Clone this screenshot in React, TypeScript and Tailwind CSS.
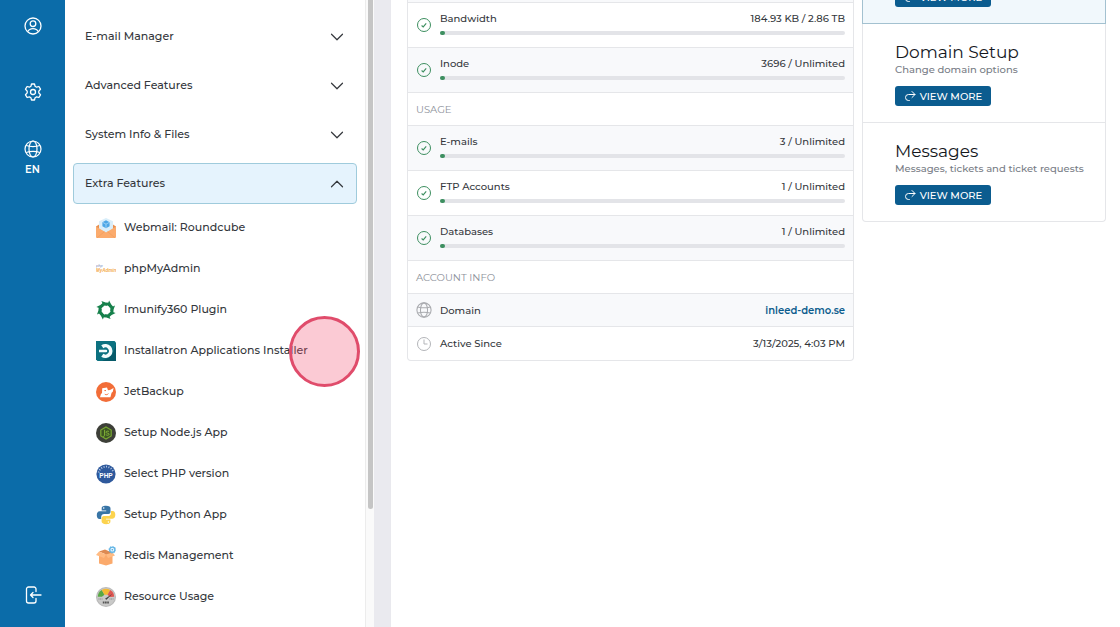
import type { ReactNode } from 'react';
import clsx from 'clsx';
import { ChevronDown, ChevronUp } from 'lucide-react';

interface FeatureLink {
    label: string;
    icon: ReactNode;
    active?: boolean;
}

interface UsageRowProps {
    label: string;
    value: string;
    striped?: boolean;
}

const RoundcubeIcon = () => (
    <svg viewBox="0 0 20 20" className="size-5 shrink-0" aria-hidden="true">
        <path d="M0 8.5 10 2l10 6.5V19H0z" fill="#e8904f" />
        <path d="M3 3.2 10 0l7 3.2v8L10 15l-7-4z" fill="#d9eefa" />
        <path d="m10 2.2 3.6 2v4L10 10.2l-3.6-2v-4z" fill="#4ba6e6" />
        <path d="m10 6.2 3.4-1.9M10 6.2 6.6 4.3M10 6.2v3.9" stroke="#b9e0f8" strokeWidth=".7" />
        <path d="m0 8.5 10 6 10-6V19a1 1 0 0 1-1 1H1a1 1 0 0 1-1-1z" fill="#fbab6d" />
        <path d="m1 19.8 7.5-6.2M19 19.8l-7.5-6.2" stroke="#f09a5b" strokeWidth=".6" />
    </svg>
);

const PhpMyAdminIcon = () => (
    <svg viewBox="0 0 20 20" className="size-5 shrink-0" aria-hidden="true">
        <text x="0" y="8" fontSize="4" fontStyle="italic" fontFamily="Liberation Sans, sans-serif" fill="#7584b5">php</text>
        <text x="0" y="12.500" fontSize="4.500" fontStyle="italic" fontWeight="700" fontFamily="Liberation Sans, sans-serif" fill="#f3aa4c">MyAdmin</text>
    </svg>
);

const ImunifyIcon = () => (
    <svg viewBox="-10 -10 20 20" className="size-5 shrink-0" aria-hidden="true">
        <circle r="5.600" fill="none" stroke="#16804b" strokeWidth="1.600" />
        {[0, 45, 90, 135, 180, 225, 270, 315].map((angle) => (
            <path key={angle} d="M-4.600-9-.4-7.600 3.800-7.200.8-4.200-2.600-4.800z" fill="#16804b" transform={`rotate(${angle})`} />
        ))}
    </svg>
);

const InstallatronIcon = () => (
    <svg viewBox="0 0 20 20" className="size-5 shrink-0" aria-hidden="true">
        <path d="M0 0h18.5L20 1.500V20H1.500L0 18.500z" fill="#0c7180" />
        <path d="M20 4v16H6l6-3 5-5z" fill="#075a69" />
        <path d="M6.300 5.700a5.300 5.300 0 1 1 0 8.600" fill="none" stroke="#f3fbfc" strokeWidth="3.600" />
        <path d="M3 8.800h7a1.200 1.200 0 0 1 0 2.400H3z" fill="#f3fbfc" />
    </svg>
);

const JetBackupIcon = () => (
    <svg viewBox="0 0 20 20" className="size-5 shrink-0" aria-hidden="true">
        <circle cx="10" cy="10" r="10" fill="#f26d38" />
        <path d="M6.200 6.200 11 5.600l1 2.600 2-.2 3.600-2-.8 3.800-1.200 1-1.200 4.400H4l1-3.400 1-.6z" fill="#fff" />
        <path d="M8.800 12.200c1.200.8 2.600.6 3.600-.6M8.400 8.600h1.600" fill="none" stroke="#f26d38" />
    </svg>
);

const NodeIcon = () => (
    <svg viewBox="0 0 20 20" className="size-5 shrink-0" aria-hidden="true">
        <circle cx="10" cy="10" r="10" fill="#3d3f38" />
        <path d="m10 4 5.200 3v6L10 16l-5.200-3V7z" fill="#3c5523" stroke="#78a832" strokeWidth="1.200" />
        <path d="M8.600 6.800v5.600c0 1-.8 1.200-1.600.8M13 8.600c-.8-.8-3-.6-3 .6 0 1.400 3.200.6 3.200 2 0 1.200-2.400 1.400-3.400.4" fill="none" stroke="#83b338" />
    </svg>
);

const PhpIcon = () => (
    <svg viewBox="0 0 20 20" className="size-5 shrink-0" aria-hidden="true">
        <circle cx="10" cy="10" r="9.600" fill="#2e599c" />
        <path d="M2.600 8.500a7.600 7.600 0 0 1 14.800 0" fill="none" stroke="#b8cae6" strokeWidth="1.800" strokeDasharray="1 1.500" />
        <text x="10" y="14" textAnchor="middle" fontSize="6.500" fontWeight="700" fontFamily="Liberation Sans, sans-serif" fill="#fff">PHP</text>
    </svg>
);

const PythonIcon = () => (
    <svg viewBox="0 0 20 20" className="size-5 shrink-0" aria-hidden="true">
        <path
            d="M10 .8C6.500.8 5.700 2 5.700 3.400v2.100h4.500v.8H3.700C1.700 6.300.8 8 .8 10.200s1 3.700 2.700 3.700h1.700v-2c0-1.600 1.300-2.900 2.900-2.900h4.200c1.300 0 2.200-1 2.200-2.300V3.400C14.500 2 13.200.8 10 .8z"
            fill="#3875a6"
        />
        <path
            d="M10.200 19.200c3.400 0 4.200-1.200 4.200-2.600v-2.100H10v-.8h6.500c2 0 2.800-1.600 2.800-3.900 0-2.200-.9-3.700-2.600-3.700H15v2.100c0 1.600-1.300 2.900-2.900 2.900H7.900c-1.300 0-2.300 1-2.300 2.300v3.200c0 1.400 1.400 2.600 4.600 2.600z"
            fill="#fcd34e"
        />
        <circle cx="7.700" cy="3" r=".8" fill="#fff" />
        <circle cx="12.400" cy="17" r=".8" fill="#fff" />
    </svg>
);

const RedisIcon = () => (
    <svg viewBox="0 0 20 20" className="size-5 shrink-0" aria-hidden="true">
        <path d="M3 8h13.500v9.500L10 19.500l-7-2z" fill="#fbaa6c" />
        <path d="m3 5.500 6-2 8 3.500-1 3-7-2z" fill="#dd8a52" />
        <path d="m3 5.500 7 3-2 3.500-8-3zM16.500 6.500l-6.500 2 2 3.500 7-2.500z" fill="#ffbb83" />
        <circle cx="16.300" cy="3.700" r="2.600" fill="#e6f5fd" stroke="#62b5e5" strokeWidth="1.400" />
        <circle cx="16.300" cy="3.700" r="3.500" fill="none" stroke="#62b5e5" strokeWidth=".7" strokeDasharray="1.200 1.500" />
        <circle cx="16.300" cy="3.700" r=".8" fill="#4aa3dc" />
    </svg>
);

const ResourceIcon = () => (
    <svg viewBox="0 0 20 20" className="size-5 shrink-0" aria-hidden="true">
        <circle cx="10" cy="10" r="10" fill="#b9b9b9" />
        <circle cx="10" cy="10" r="9" fill="#c9c9c8" />
        <path d="M1.800 9.800A8.200 8.200 0 0 1 5.800 3l2.700 4.800-2.600 2z" fill="#58a844" />
        <path d="M5.800 3a8.200 8.200 0 0 1 8.400 0l-2.700 4.800H8.500z" fill="#f4b932" />
        <path d="M14.200 3a8.200 8.200 0 0 1 4 6.800l-4.200.2-2.500-2.200z" fill="#df5550" />
        <path d="m9 11.800 7.500-5-6 6z" fill="#444" />
        <path d="M2.500 12h4M13.500 12h4" stroke="#777" strokeWidth=".8" strokeDasharray="1 .6" />
        <path d="M6.800 15.500h6.400" stroke="#555" strokeWidth="2.200" strokeDasharray="1.700 .5" />
    </svg>
);

const GlobeIcon = ({ className }: { className: string }) => (
    <svg viewBox="0 0 18 18" className={className} fill="none" stroke="currentColor" strokeWidth="1.200" aria-hidden="true">
        <circle cx="9" cy="9" r="8" />
        <ellipse cx="9" cy="9" rx="4" ry="8" />
        <path d="M2 5.500c4 1.200 10 1.200 14 0M2 12.500c4-1.200 10-1.200 14 0" />
    </svg>
);

const UserIcon = () => (
    <svg viewBox="0 0 18 18" className="size-[18px]" fill="none" stroke="currentColor" strokeWidth="1.300" aria-hidden="true">
        <circle cx="9" cy="9" r="8" />
        <circle cx="9" cy="6.700" r="2.800" />
        <path d="M3.600 14.800c1.200-2.500 3.200-3.200 5.400-3.200s4.200.7 5.400 3.200" />
    </svg>
);

const GearIcon = () => (
    <svg viewBox="0 0 18 18" className="size-[18px]" fill="none" stroke="currentColor" strokeWidth="1.300" strokeLinejoin="round" aria-hidden="true">
        <path d="M7.500 1h3l.6 2.300 1.500.9 2.300-.7 1.600 2.700-1.700 1.900v1.800l1.700 1.900-1.600 2.700-2.300-.7-1.500.9-.6 2.300h-3l-.6-2.300-1.500-.9-2.300.7-1.600-2.700 1.700-1.900V8.100L1.500 6.200l1.600-2.700 2.300.7 1.500-.9z" />
        <circle cx="9" cy="9" r="2.500" />
    </svg>
);

const ExitIcon = () => (
    <svg viewBox="0 0 18 18" className="size-[18px]" fill="none" stroke="currentColor" strokeWidth="1.300" strokeLinecap="round" strokeLinejoin="round" aria-hidden="true">
        <path d="M12 5.500V3a2 2 0 0 0-2-2H4.500a2 2 0 0 0-2 2v12a2 2 0 0 0 2 2H10a2 2 0 0 0 2-2v-2.500M17 9H6.500M9 6.500 6.500 9 9 11.500" />
    </svg>
);

const CheckIcon = () => (
    <svg viewBox="0 0 16 16" className="size-4 shrink-0 text-[#3d8f60]" fill="none" stroke="currentColor" aria-hidden="true">
        <circle cx="8" cy="8" r="6.500" />
        <path d="m5.600 8.500 1.600 1.400 3-3.600" strokeWidth="1.100" />
    </svg>
);

const ClockIcon = () => (
    <svg viewBox="0 0 16 16" className="size-4 shrink-0 text-[#b3b5b9]" fill="none" stroke="currentColor" aria-hidden="true">
        <circle cx="8" cy="8" r="6.500" />
        <path d="M8 3.500V8h3.500" />
    </svg>
);

const categories = ['E-mail Manager', 'Advanced Features', 'System Info & Files'];

const features: FeatureLink[] = [
    { label: 'Webmail: Roundcube', icon: <RoundcubeIcon /> },
    { label: 'phpMyAdmin', icon: <PhpMyAdminIcon /> },
    { label: 'Imunify360 Plugin', icon: <ImunifyIcon /> },
    { label: 'Installatron Applications Installer', icon: <InstallatronIcon />, active: true },
    { label: 'JetBackup', icon: <JetBackupIcon /> },
    { label: 'Setup Node.js App', icon: <NodeIcon /> },
    { label: 'Select PHP version', icon: <PhpIcon /> },
    { label: 'Setup Python App', icon: <PythonIcon /> },
    { label: 'Redis Management', icon: <RedisIcon /> },
    { label: 'Resource Usage', icon: <ResourceIcon /> },
];

const Rail = () => (
    <nav className="flex w-[65px] shrink-0 flex-col items-center bg-[#0b6ca9] pt-[17px] pb-[23px] text-white">
        <button type="button" aria-label="Account">
            <UserIcon />
        </button>
        <button type="button" aria-label="Settings" className="mt-12">
            <GearIcon />
        </button>
        <button type="button" className="mt-[39px] flex flex-col items-center gap-1 text-[10px] leading-4 font-semibold">
            <GlobeIcon className="size-[18px]" />
            EN
        </button>
        <button type="button" aria-label="Log out" className="mt-auto">
            <ExitIcon />
        </button>
    </nav>
);

const Sidebar = () => (
    <aside className="w-[300px] shrink-0 overflow-hidden px-2 pt-4 text-[11px] font-medium text-[#34373c]">
        <div className="flex flex-col gap-2">
            {categories.map((name) => (
                <button key={name} type="button" className="flex h-[41px] items-center justify-between pr-[9px] pl-3 text-left">
                    {name}
                    <ChevronDown size={22} strokeWidth={1.3} />
                </button>
            ))}
            <button
                type="button"
                aria-expanded="true"
                className="flex h-[41px] items-center justify-between rounded-sm border border-[#9fcbdc] bg-[#e5f3fd] pr-2 pl-[11px] text-left"
            >
                Extra Features
                <ChevronUp size={22} strokeWidth={1.3} />
            </button>
        </div>
        <ul className="pt-[3px]">
            {features.map(({ label, icon, active }) => (
                <li key={label} className="relative">
                    <a href="#" className="flex h-[41px] items-center gap-2 pl-[23px] whitespace-nowrap">
                        {icon}
                        {label}
                    </a>
                    {active && (
                        <span className="pointer-events-none absolute top-[-14px] right-[-3px] size-[71px] rounded-full border-3 border-[#e04c6b] bg-[#f24e70]/30" />
                    )}
                </li>
            ))}
        </ul>
    </aside>
);

const Scrollbar = () => (
    <div className="w-[9px] shrink-0 border-l border-[#ececec] bg-[#fafafa] pl-0.5">
        <div className="h-[509px] w-[5px] rounded-b-full bg-[#c5c5c5]" />
    </div>
);

const UsageRow = ({ label, value, striped }: UsageRowProps) => (
    <div className={clsx('flex h-[45px] items-center gap-2 border-b border-[#e5e6e9] px-2', striped && 'bg-[#f8f9fb]')}>
        <CheckIcon />
        <div className="flex-1 pb-1">
            <div className="flex justify-between leading-4">
                <span>{label}</span>
                <span>{value}</span>
            </div>
            <div role="progressbar" aria-label={label} aria-valuenow={1} className="mt-1 h-1 rounded-full bg-[#e3e4e8]">
                <div className="h-1 w-[5px] rounded-full bg-[#3d8f60]" />
            </div>
        </div>
    </div>
);

const GroupTitle = ({ children }: { children: ReactNode }) => (
    <h3 className="flex h-[33px] items-center border-b border-[#e5e6e9] px-2 font-normal text-[#8d919a]">{children}</h3>
);

const StatsCard = () => (
    <section className="flex-1 rounded-b-sm border border-t-0 border-[#e5e6e9] text-[10px] font-medium text-[#34373c]">
        <div className="h-[3px] border-b border-[#e5e6e9] bg-[#f8f9fb]" />
        <UsageRow label="Bandwidth" value="184.93 KB / 2.86 TB" />
        <UsageRow label="Inode" value="3696 / Unlimited" striped />
        <GroupTitle>USAGE</GroupTitle>
        <UsageRow label="E-mails" value="3 / Unlimited" striped />
        <UsageRow label="FTP Accounts" value="1 / Unlimited" />
        <UsageRow label="Databases" value="1 / Unlimited" striped />
        <GroupTitle>ACCOUNT INFO</GroupTitle>
        <div className="flex h-[33px] items-center gap-2 border-b border-[#e5e6e9] bg-[#f8f9fb] px-2">
            <GlobeIcon className="size-4 shrink-0 text-[#a9abaf]" />
            <span>Domain</span>
            <a href="#" className="ml-auto font-semibold text-[#0b5c8d]">inleed-demo.se</a>
        </div>
        <div className="flex h-[33px] items-center gap-2 px-2">
            <ClockIcon />
            <span>Active Since</span>
            <span className="ml-auto">3/13/2025, 4:03 PM</span>
        </div>
    </section>
);

const ViewMoreButton = () => (
    <button type="button" className="flex h-5 w-24 shrink-0 items-center justify-center gap-1 rounded-[3px] bg-[#0b5c8f] text-[10px] font-medium text-white">
        <svg viewBox="0 0 12 12" className="size-3" fill="none" stroke="currentColor" strokeLinecap="round" strokeLinejoin="round" aria-hidden="true">
            <path d="M8 1.500 11 4.500 8 7.500M11 4.500H4.500a3 3 0 0 0 0 6h.8" />
        </svg>
        VIEW MORE
    </button>
);

const ActionCard = ({ title, text }: { title: string; text: string }) => (
    <div className="border-b border-[#e5e6e9] pt-[18px] pb-4 pl-8 last:border-b-0">
        <h2 className="text-[17px] leading-5 text-[#15181d]">{title}</h2>
        <p className="mb-2 text-[10px] leading-4 font-medium text-[#777c85]">{text}</p>
        <ViewMoreButton />
    </div>
);

export default function App() {
    return (
        <div className="flex h-screen overflow-hidden bg-white font-['Montserrat','Inter',sans-serif]">
            <Rail />
            <Sidebar />
            <Scrollbar />
            <div className="w-4 shrink-0 bg-[#eaeaef]" />
            <main className="flex min-w-0 flex-1 items-start gap-2 border-l border-[#e9e9ee] pr-[14px] pl-4">
                <StatsCard />
                <aside className="w-[244px] shrink-0">
                    <div className="border border-t-0 border-[#a3c1d0] bg-[#f1f8fc] pb-4 pl-8">
                        <div className="flex h-[7px] items-end overflow-hidden">
                            <ViewMoreButton />
                        </div>
                    </div>
                    <div className="rounded-b-sm border border-t-0 border-[#e5e6e9]">
                        <ActionCard title="Domain Setup" text="Change domain options" />
                        <ActionCard title="Messages" text="Messages, tickets and ticket requests" />
                    </div>
                </aside>
            </main>
        </div>
    );
}
